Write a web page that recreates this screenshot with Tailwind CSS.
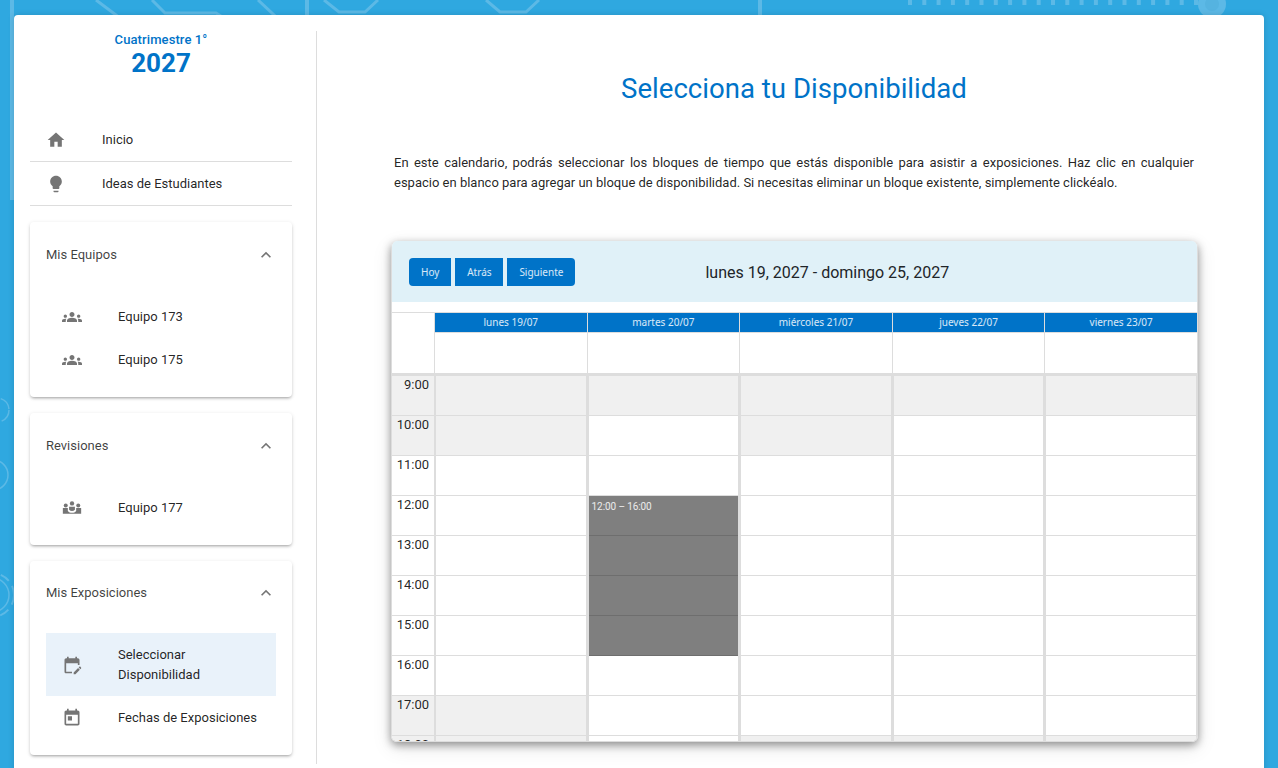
<!DOCTYPE html>
<html lang="es">
<head>
    <meta charset="UTF-8">
    <title>Selecciona tu Disponibilidad</title>
    <script src="https://cdn.jsdelivr.net/npm/@tailwindcss/browser@4"></script>
</head>
<body class="h-screen overflow-hidden bg-[#2fa8e0] font-['Roboto',sans-serif] text-[13px] text-black/87">

    <!-- fondo de circuitos -->
    <svg class="absolute inset-0" width="1278" height="768" fill="none" stroke="#5cb9e6" stroke-width="3">
        <path d="M96 0L120 18M152 0L165 13H216L224 18M258 0L275 16V18M324 0L339 12H365L378 0M486 0L500 12H526L539 0"/>
        <path d="M12 0V200M307 0V18M760 0V18" stroke-width="4"/>
        <path d="M908 2.5H1200" stroke-dasharray="4 10.3" stroke-width="5"/>
        <circle cx="-3" cy="410" r="12" stroke-width="1.5" stroke-dasharray="14 6"/>
        <circle cx="-7" cy="475" r="15" stroke-width="1.5"/>
        <circle cx="-8" cy="595" r="17" stroke-width="1.5"/>
        <circle cx="-8" cy="595" r="22" stroke-width="2" stroke-dasharray="10 6"/>
        <circle cx="1212" cy="4" r="14" fill="#5cb9e6" stroke="none"/>
        <circle cx="1212" cy="4" r="7" fill="#55b3e0" stroke="none"/>
    </svg>

    <div class="relative mx-[14px] mt-[15px] flex h-[780px] rounded bg-white py-4 shadow-[0_0_6px_rgba(0,0,0,.15)]">

        <!-- sidebar -->
        <aside class="h-[733px] w-[303px] shrink-0 overflow-hidden border-r border-[#ddd] pl-4 pr-6">
            <div class="w-[262px] text-center text-[#0073c8]">
                <p class="text-[13px] font-medium leading-[18px] tracking-[0.1px]">Cuatrimestre 1°</p>
                <p class="text-[26px] font-bold leading-[28px]">2027</p>
            </div>

            <ul class="mt-[41px] w-[262px]">
                <li class="flex h-[44px] items-center border-b border-[#ddd]">
                    <svg class="ml-4 size-5 fill-[#757575]" viewBox="0 0 24 24"><path d="M10 20v-6h4v6h5v-8h3L12 3 2 12h3v8z"/></svg>
                    <span class="ml-[36px]">Inicio</span>
                </li>
                <li class="flex h-[44px] items-center border-b border-[#ddd]">
                    <svg class="ml-4 size-5 fill-[#757575]" viewBox="0 0 24 24"><path d="M9 21c0 .55.45 1 1 1h4c.55 0 1-.45 1-1v-1H9v1zm3-19C8.14 2 5 5.14 5 9c0 2.38 1.19 4.47 3 5.74V17c0 .55.45 1 1 1h6c.55 0 1-.45 1-1v-2.26c1.81-1.27 3-3.36 3-5.74 0-3.86-3.14-7-7-7z"/></svg>
                    <span class="ml-[36px]">Ideas de Estudiantes</span>
                </li>
            </ul>

            <section class="mt-4 w-[262px] rounded-sm px-4 pb-4 shadow-[0_2px_3px_-1px_rgba(0,0,0,.3),0_1px_4px_rgba(0,0,0,.12)]">
                <header class="flex h-[65px] items-center justify-between text-black/75">
                    <span>Mis Equipos</span>
                    <svg class="size-5 fill-[#757575]" viewBox="0 0 24 24"><path d="M7.41 15.41 12 10.83l4.59 4.58L18 14l-6-6-6 6z"/></svg>
                </header>
                <div class="pt-2">
                    <div class="flex h-[43px] items-center">
                        <svg class="ml-4 size-5 fill-[#757575]" viewBox="0 0 24 24"><path d="M12 12.75c1.63 0 3.07.39 4.24.9 1.08.48 1.76 1.56 1.76 2.73V18H6v-1.61c0-1.18.68-2.26 1.76-2.73 1.17-.52 2.61-.91 4.24-.91zM4 13c1.1 0 2-.9 2-2s-.9-2-2-2-2 .9-2 2 .9 2 2 2zm1.13 1.1C4.76 14.04 4.39 14 4 14c-.99 0-1.93.21-2.78.58C.48 14.9 0 15.62 0 16.43V18h4.5v-1.61c0-.83.23-1.61.63-2.29zM20 13c1.1 0 2-.9 2-2s-.9-2-2-2-2 .9-2 2 .9 2 2 2zm4 3.43c0-.81-.48-1.53-1.22-1.85-.85-.37-1.79-.58-2.78-.58-.39 0-.76.04-1.13.1.4.68.63 1.46.63 2.29V18H24v-1.57zM12 6c1.66 0 3 1.34 3 3s-1.34 3-3 3-3-1.34-3-3 1.34-3 3-3z"/></svg>
                        <span class="ml-[36px]">Equipo 173</span>
                    </div>
                    <div class="flex h-[43px] items-center">
                        <svg class="ml-4 size-5 fill-[#757575]" viewBox="0 0 24 24"><path d="M12 12.75c1.63 0 3.07.39 4.24.9 1.08.48 1.76 1.56 1.76 2.73V18H6v-1.61c0-1.18.68-2.26 1.76-2.73 1.17-.52 2.61-.91 4.24-.91zM4 13c1.1 0 2-.9 2-2s-.9-2-2-2-2 .9-2 2 .9 2 2 2zm1.13 1.1C4.76 14.04 4.39 14 4 14c-.99 0-1.93.21-2.78.58C.48 14.9 0 15.62 0 16.43V18h4.5v-1.61c0-.83.23-1.61.63-2.29zM20 13c1.1 0 2-.9 2-2s-.9-2-2-2-2 .9-2 2 .9 2 2 2zm4 3.43c0-.81-.48-1.53-1.22-1.85-.85-.37-1.79-.58-2.78-.58-.39 0-.76.04-1.13.1.4.68.63 1.46.63 2.29V18H24v-1.57zM12 6c1.66 0 3 1.34 3 3s-1.34 3-3 3-3-1.34-3-3 1.34-3 3-3z"/></svg>
                        <span class="ml-[36px]">Equipo 175</span>
                    </div>
                </div>
            </section>

            <section class="mt-4 w-[262px] rounded-sm px-4 pb-[15px] shadow-[0_2px_3px_-1px_rgba(0,0,0,.3),0_1px_4px_rgba(0,0,0,.12)]">
                <header class="flex h-[65px] items-center justify-between text-black/75">
                    <span>Revisiones</span>
                    <svg class="size-5 fill-[#757575]" viewBox="0 0 24 24"><path d="M7.41 15.41 12 10.83l4.59 4.58L18 14l-6-6-6 6z"/></svg>
                </header>
                <div class="pt-2">
                    <div class="flex h-[44px] items-center">
                        <svg class="ml-4 size-5 fill-[#757575]" viewBox="0 0 24 24"><circle cx="12" cy="6.5" r="2.6"/><circle cx="4.5" cy="9" r="2.4"/><circle cx="19.5" cy="9" r="2.4"/><path d="M8.5 10.5h7v3.5c-1 1-2.2 1.5-3.5 1.5s-2.5-.5-3.5-1.5zM1 12h6v3.5c1 1.5 3 2.2 5 2.2s4-.7 5-2.2V12h6v7H1z"/></svg>
                        <span class="ml-[36px]">Equipo 177</span>
                    </div>
                </div>
            </section>

            <section class="mt-4 w-[262px] rounded px-4 pb-4 shadow-[0_2px_3px_-1px_rgba(0,0,0,.3),0_1px_4px_rgba(0,0,0,.12)]">
                <header class="flex h-[64px] items-center justify-between text-black/75">
                    <span>Mis Exposiciones</span>
                    <svg class="size-5 fill-[#757575]" viewBox="0 0 24 24"><path d="M7.41 15.41 12 10.83l4.59 4.58L18 14l-6-6-6 6z"/></svg>
                </header>
                <div class="pt-2">
                    <div class="flex h-[63px] items-center bg-[#e9f2fa]">
                        <svg class="ml-4 size-5 shrink-0 fill-[#757575]" viewBox="0 0 24 24"><path d="M5 10h14v2h2V6c0-1.1-.9-2-2-2h-1V2h-2v2H8V2H6v2H5c-1.11 0-1.99.9-1.99 2L3 20c0 1.1.89 2 2 2h7v-2H5V10zm17.84 6.28-.71.71-2.12-2.12.71-.71c.39-.39 1.02-.39 1.41 0l.71.71c.39.39.39 1.02 0 1.41zm-3.54-.7 2.12 2.12-5.3 5.3H14v-2.12l5.3-5.3z"/></svg>
                        <span class="ml-[36px] leading-5">Seleccionar<br>Disponibilidad</span>
                    </div>
                    <div class="flex h-[43px] items-center">
                        <svg class="ml-4 size-5 shrink-0 fill-[#757575]" viewBox="0 0 24 24"><path d="M19 3h-1V1h-2v2H8V1H6v2H5c-1.11 0-1.99.9-1.99 2L3 19c0 1.1.89 2 2 2h14c1.1 0 2-.9 2-2V5c0-1.1-.9-2-2-2zm0 16H5V8h14v11zM7 10h5v5H7z"/></svg>
                        <span class="ml-[36px]">Fechas de Exposiciones</span>
                    </div>
                </div>
            </section>
        </aside>

        <!-- contenido -->
        <main class="flex-1 pl-[74px]">
            <h1 class="mt-[42px] w-[806px] text-center text-[27.6px] leading-[32px] text-[#0073c8]">Selecciona tu Disponibilidad</h1>
            <p class="mt-[48px] ml-[3px] h-[41px] w-[800px] text-justify text-[13px] leading-[20px] text-black/87"><span class="leading-[20px]">En este calendario, podrás seleccionar los bloques de tiempo que estás disponible para asistir a exposiciones. Haz clic en cualquier espacio en blanco para agregar un bloque de disponibilidad. Si necesitas eliminar un bloque existente, simplemente clickéalo.</span></p>

            <div class="mt-[47px] h-[501px] w-[807px] overflow-hidden rounded-md border-x border-b border-[#ddd] shadow-[0_3px_8px_rgba(0,0,0,.4),0_6px_20px_rgba(0,0,0,.1)]">
                <div class="flex h-[61px] items-center bg-[#e0f1f8] pl-[17px]">
                    <button class="h-7 rounded-l bg-[#0073c8] px-3 pt-[1px] font-['Noto_Sans',sans-serif] text-[10px] text-white/85">Hoy</button>
                    <button class="ml-1 h-7 w-[48px] bg-[#0073c8] pt-[1px] font-['Noto_Sans',sans-serif] text-[10px] text-white/85">Atrás</button>
                    <button class="ml-1 h-7 rounded-r bg-[#0073c8] px-3 pt-[1px] font-['Noto_Sans',sans-serif] text-[10px] text-white/85">Siguiente</button>
                    <h2 class="ml-[130px] pt-[2px] text-base text-[#212529]">lunes 19, 2027 - domingo 25, 2027</h2>
                </div>

                <div class="h-[10px]"></div>

                <div class="grid grid-cols-[42px_repeat(5,1fr)] border-t border-[#ddd]">
                    <div class="h-[60px]"></div>
                    <div class="border-l border-[#ddd]"><div class="h-5 border-b border-[#ddd] bg-[#0073c8] text-center font-['Noto_Sans',sans-serif] text-[10px] leading-[19px] text-white/85">lunes 19/07</div></div>
                    <div class="border-l border-[#ddd]"><div class="h-5 border-b border-[#ddd] bg-[#0073c8] text-center font-['Noto_Sans',sans-serif] text-[10px] leading-[19px] text-white/85">martes 20/07</div></div>
                    <div class="border-l border-[#ddd]"><div class="h-5 border-b border-[#ddd] bg-[#0073c8] text-center font-['Noto_Sans',sans-serif] text-[10px] leading-[19px] text-white/85">miércoles 21/07</div></div>
                    <div class="border-l border-[#ddd]"><div class="h-5 border-b border-[#ddd] bg-[#0073c8] text-center font-['Noto_Sans',sans-serif] text-[10px] leading-[19px] text-white/85">jueves 22/07</div></div>
                    <div class="border-l border-[#ddd]"><div class="h-5 border-b border-[#ddd] bg-[#0073c8] text-center font-['Noto_Sans',sans-serif] text-[10px] leading-[19px] text-white/85">viernes 23/07</div></div>
                </div>

                <div id="calendar-body" class="grid grid-cols-[42px_repeat(5,1fr)] border-t-[3px] border-[#ddd]"></div>
            </div>
        </main>
    </div>

    <script>
        // horas del calendario y que columnas quedan fuera de horario
        const hours = [9, 10, 11, 12, 13, 14, 15, 16, 17, 18];
        const closed = {
            9: [0, 1, 2, 3, 4, 5],
            10: [0, 1, 3],
            17: [0, 1],
            18: [0, 1, 3, 4, 5]
        };
        const body = document.getElementById('calendar-body');

        hours.forEach((hour) => {
            for (let col = 0; col < 6; col++) {
                const cell = document.createElement('div');
                const off = (closed[hour] || []).includes(col);
                cell.className = (off ? 'bg-[#f0f0f0] ' : 'bg-white ') + 'relative h-10 border-b border-[#ddd]';
                if (col === 0) {
                    cell.className += ' pr-[5px] text-right text-[13px] leading-[18px]';
                    cell.textContent = hour + ':00';
                } else {
                    cell.className += ' border-l-2 border-r border-x-[#ddd]';
                }
                if (hour === 12 && col === 2) {
                    cell.innerHTML = '<div class="absolute top-0 left-0 right-0 z-10 h-40 bg-black/50 px-[3px] pt-[4px] text-[10px] leading-[14px] tracking-[-0.1px] text-white/85">12:00 – 16:00</div>';
                }
                body.appendChild(cell);
            }
        });
    </script>
</body>
</html>
